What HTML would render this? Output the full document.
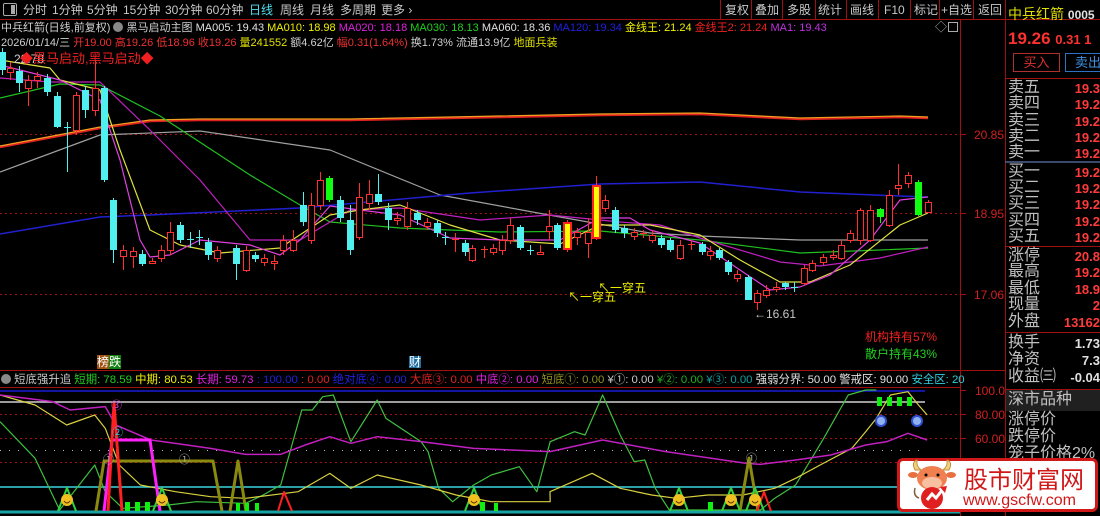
<!DOCTYPE html>
<html><head><meta charset="utf-8">
<style>
*{margin:0;padding:0;box-sizing:border-box}
body{width:1100px;height:516px;background:#000;overflow:hidden;position:relative;font-family:"Liberation Sans","Noto Sans CJK SC",sans-serif;font-size:12px;color:#c8c8c8}
.a{position:absolute;white-space:nowrap;line-height:1}
.t{font-size:12px;top:4px}
.rp{position:absolute;left:1008px;font-size:16px;color:#c0c0c0;line-height:1}
.rv{position:absolute;right:0;font-size:13px;font-weight:bold;color:#ff3b3b;line-height:1}
</style></head><body>
<svg id="s" width="1100" height="516" style="position:absolute;left:0;top:0" xmlns="http://www.w3.org/2000/svg">
<line x1="0" y1="19.5" x2="1100" y2="19.5" stroke="#a01010"/>
<line x1="960.5" y1="20" x2="960.5" y2="516" stroke="#a01010"/>
<line x1="1005.5" y1="20" x2="1005.5" y2="516" stroke="#a01010"/>
<line x1="0" y1="370.5" x2="1005" y2="370.5" stroke="#a01010"/>
<line x1="0" y1="387.5" x2="960" y2="387.5" stroke="#a01010"/>
<g stroke="#a01010">
<line x1="720.5" y1="0" x2="720.5" y2="19"/><line x1="751.5" y1="0" x2="751.5" y2="19"/><line x1="782.5" y1="0" x2="782.5" y2="19"/><line x1="815.5" y1="0" x2="815.5" y2="19"/><line x1="846.5" y1="0" x2="846.5" y2="19"/><line x1="878.5" y1="0" x2="878.5" y2="19"/><line x1="910.5" y1="0" x2="910.5" y2="19"/><line x1="939.5" y1="0" x2="939.5" y2="19"/><line x1="973.5" y1="0" x2="973.5" y2="19"/><line x1="1005.5" y1="0" x2="1005.5" y2="19"/>
</g>
<g stroke="#a01010" stroke-dasharray="2,3">
<line x1="0" y1="134.5" x2="960" y2="134.5"/><line x1="0" y1="213.5" x2="960" y2="213.5"/><line x1="0" y1="294.5" x2="960" y2="294.5"/>
<line x1="0" y1="414.5" x2="960" y2="414.5"/><line x1="0" y1="438.5" x2="960" y2="438.5"/><line x1="0" y1="462.5" x2="960" y2="462.5"/>
</g>
<line x1="0" y1="450.5" x2="925" y2="450.5" stroke="#bbb" stroke-dasharray="1,8"/>
<g stroke="#a01010"><line x1="960" y1="134.5" x2="966" y2="134.5"/><line x1="960" y1="213.5" x2="966" y2="213.5"/><line x1="960" y1="294.5" x2="966" y2="294.5"/><line x1="960" y1="390.5" x2="966" y2="390.5"/><line x1="960" y1="414.5" x2="966" y2="414.5"/><line x1="960" y1="438.5" x2="966" y2="438.5"/><line x1="960" y1="462.5" x2="966" y2="462.5"/></g>
<line x1="0" y1="391" x2="925" y2="391" stroke="#1a1ad8" stroke-width="1.5"/>
<line x1="0" y1="402" x2="925" y2="402" stroke="#d0d0d0" stroke-width="1.5"/>
<line x1="0" y1="487" x2="960" y2="487" stroke="#3ad6e0" stroke-width="1.5"/>
<line x1="0" y1="512" x2="960" y2="512" stroke="#17a3a3" stroke-width="3"/>
<g id="g"></g>
</svg>

<div class="a" style="left:3px;top:3px;width:14px;height:13px;border:1px solid #aaa;border-radius:2px"><div style="position:absolute;right:1px;top:1px;width:4px;height:9px;background:#aaa"></div></div>
<div class="a t" style="left:23px">分时</div>
<div class="a t" style="left:52px">1分钟</div>
<div class="a t" style="left:87px">5分钟</div>
<div class="a t" style="left:123px">15分钟</div>
<div class="a t" style="left:165px">30分钟</div>
<div class="a t" style="left:206px">60分钟</div>
<div class="a t" style="left:249px;color:#4fe0f0">日线</div>
<div class="a t" style="left:280px">周线</div>
<div class="a t" style="left:310px">月线</div>
<div class="a t" style="left:340px">多周期</div>
<div class="a t" style="left:381px">更多 ›</div>
<div class="a t" style="left:725px">复权</div>
<div class="a t" style="left:755px">叠加</div>
<div class="a t" style="left:787px">多股</div>
<div class="a t" style="left:818px">统计</div>
<div class="a t" style="left:850px">画线</div>
<div class="a t" style="left:884px">F10</div>
<div class="a t" style="left:914px">标记</div>
<div class="a t" style="left:941px">+自选</div>
<div class="a t" style="left:978px">返回</div>

<div class="a" style="left:1px;top:22px;font-size:11px;color:#d0d0d0">中兵红箭(日线,前复权) <span style="display:inline-block;width:10px;height:10px;border-radius:50%;background:#888;vertical-align:-1px"></span> 黑马启动主图 <span style="color:#e0e0e0">MA005: 19.43</span> <span style="color:#f0f000">MA010: 18.98</span> <span style="color:#e020e0">MA020: 18.18</span> <span style="color:#20d020">MA030: 18.13</span> <span style="color:#e0e0e0">MA060: 18.36</span> <span style="color:#2020e0">MA120: 19.34</span> <span style="color:#f0f000">金线王: 21.24</span> <span style="color:#f02020">金线王2: 21.24</span> <span style="color:#c030e0">MA1: 19.43</span></div>
<div class="a" style="left:935px;top:21px;color:#aaa">◇</div>
<div class="a" style="left:948px;top:22px;width:10px;height:10px;border:1px solid #aaa"></div>
<div class="a" style="left:1px;top:38px;font-size:11px;color:#d0d0d0">2026/01/14/三 <span style="color:#f03030">开19.00 高19.26 低18.96 收19.26</span> <span style="color:#e0e000">量241552</span> 额4.62亿 <span style="color:#f03030">幅0.31(1.64%)</span> 换1.73% 流通13.9亿 <span style="color:#e0e000">地面兵装</span></div>
<div class="a" style="left:14px;top:53px;color:#d0d0d0">22.78</div>
<div class="a" style="left:20px;top:52px;color:#f02020;font-size:13px">◆黑马启动,黑马启动◆</div>

<div class="a" style="left:974px;top:129px;color:#d02020">20.85</div>
<div class="a" style="left:974px;top:208px;color:#d02020">18.95</div>
<div class="a" style="left:974px;top:289px;color:#d02020">17.06</div>
<div class="a" style="left:975px;top:385px;color:#d02020">100.0</div>
<div class="a" style="left:975px;top:409px;color:#d02020">80.00</div>
<div class="a" style="left:975px;top:433px;color:#d02020">60.00</div>

<div class="a" style="left:598px;top:282px;color:#f0f000">↖一穿五</div>
<div class="a" style="left:568px;top:291px;color:#f0f000">↖一穿五</div>
<div class="a" style="left:754px;top:308px;color:#c8c8c8">←16.61</div>
<div class="a" style="left:865px;top:331px;color:#f02020">机构持有57%</div>
<div class="a" style="left:865px;top:348px;color:#20d020">散户持有43%</div>
<div class="a" style="left:97px;top:356px;font-size:12px"><span style="background:#a05010;color:#fff">榜</span><span style="background:#108010;color:#fff">跌</span></div>
<div class="a" style="left:409px;top:356px;font-size:12px;background:#2070a0;color:#fff">财</div>

<div class="a" style="left:1px;top:374px;font-size:11.4px;color:#c8c8c8"><span style="display:inline-block;width:10px;height:10px;border-radius:50%;background:#888;vertical-align:-1px"></span> 短底强升追 <span style="color:#20d020">短期: 78.59</span> <span style="color:#f0f000">中期: 80.53</span> <span style="color:#e020e0">长期: 59.73</span> <span style="color:#2020e0">: 100.00</span> <span style="color:#e02020">: 0.00</span> <span style="color:#2020e0">绝对底④: 0.00</span> <span style="color:#e02020">大底③: 0.00</span> <span style="color:#e020e0">中底②: 0.00</span> <span style="color:#909020">短底①: 0.00</span> <span style="color:#c8c8c8">¥①: 0.00</span> <span style="color:#20b020">¥②: 0.00</span> <span style="color:#10a0a0">¥③: 0.00</span> <span style="color:#e0e0e0">强弱分界: 50.00</span> <span style="color:#e0e0e0">警戒区: 90.00</span> <span style="color:#30d0e0">安全区: 20</span></div>

<div class="a" style="left:1008px;top:7px;font-size:14px;color:#e0e000">中兵红箭 <span style="font-size:12px;font-weight:bold;color:#e0e0e0">0005</span></div>
<div class="a" style="left:1008px;top:30px;font-size:17px;font-weight:bold;color:#ff3030">19.26 <span style="font-size:13px">0.31 1</span></div>
<div class="a" style="left:1013px;top:53px;width:47px;height:19px;border:1px solid #b03030;color:#e03030;font-size:13px;text-align:center;line-height:17px">买入</div>
<div class="a" style="left:1065px;top:53px;width:40px;height:19px;border:1px solid #3070c0;color:#4090e0;font-size:13px;padding-left:9px;line-height:17px">卖出</div>
<svg width="95" height="400" style="position:absolute;left:1005px;top:0">
<line x1="0" y1="78.5" x2="95" y2="78.5" stroke="#a01010"/>
<line x1="0" y1="162" x2="95" y2="162" stroke="#506090" stroke-width="1.5"/>
<line x1="0" y1="246.5" x2="95" y2="246.5" stroke="#a01010"/>
<line x1="0" y1="332.5" x2="95" y2="332.5" stroke="#a01010"/>
<line x1="0" y1="389.5" x2="95" y2="389.5" stroke="#a01010"/>
</svg>
<div style="position:absolute;left:1006px;top:390px;width:94px;height:21px;background:#202020"></div>
<div class="rp" style="top:80px">卖五</div><div class="rv" style="top:82px">19.3</div>
<div class="rp" style="top:96px">卖四</div><div class="rv" style="top:98px">19.2</div>
<div class="rp" style="top:113px">卖三</div><div class="rv" style="top:115px">19.2</div>
<div class="rp" style="top:129px">卖二</div><div class="rv" style="top:131px">19.2</div>
<div class="rp" style="top:145px">卖一</div><div class="rv" style="top:147px">19.2</div>
<div class="rp" style="top:164px">买一</div><div class="rv" style="top:166px">19.2</div>
<div class="rp" style="top:180px">买二</div><div class="rv" style="top:182px">19.2</div>
<div class="rp" style="top:196px">买三</div><div class="rv" style="top:198px">19.2</div>
<div class="rp" style="top:213px">买四</div><div class="rv" style="top:215px">19.2</div>
<div class="rp" style="top:229px">买五</div><div class="rv" style="top:231px">19.2</div>
<div class="rp" style="top:248px">涨停</div><div class="rv" style="top:250px">20.8</div>
<div class="rp" style="top:264px">最高</div><div class="rv" style="top:266px">19.2</div>
<div class="rp" style="top:281px">最低</div><div class="rv" style="top:283px">18.9</div>
<div class="rp" style="top:297px">现量</div><div class="rv" style="top:299px">2</div>
<div class="rp" style="top:314px">外盘</div><div class="rv" style="top:316px">13162</div>
<div class="rp" style="top:335px">换手</div><div class="rv" style="top:337px;color:#e0e0e0">1.73</div>
<div class="rp" style="top:352px">净资</div><div class="rv" style="top:354px;color:#e0e0e0">7.3</div>
<div class="rp" style="top:369px">收益㈢</div><div class="rv" style="top:371px;color:#e0e0e0">-0.04</div>
<div class="rp" style="top:392px">深市品种</div>
<div class="rp" style="top:412px">涨停价</div>
<div class="rp" style="top:429px">跌停价</div>
<div class="rp" style="top:446px">笼子价格2%限</div>

<div style="position:absolute;left:897px;top:458px;width:201px;height:54px;background:#fff;border:3px solid #d01818;border-radius:6px"></div>
<svg width="60" height="54" style="position:absolute;left:905px;top:458px">
<path d="M10 12 Q6 4 12 2 Q11 8 16 12Z" fill="#f0d080" stroke="#c09040"/>
<path d="M44 12 Q48 4 42 2 Q43 8 38 12Z" fill="#f0d080" stroke="#c09040"/>
<ellipse cx="8" cy="17" rx="5" ry="3" fill="#e87040"/><ellipse cx="46" cy="17" rx="5" ry="3" fill="#e87040"/>
<ellipse cx="27" cy="20" rx="15" ry="12" fill="#f08050"/>
<ellipse cx="27" cy="25" rx="10" ry="6" fill="#f8c0a0"/>
<circle cx="21" cy="17" r="1.5" fill="#000"/><circle cx="33" cy="17" r="1.5" fill="#000"/>
<circle cx="27" cy="40" r="11" fill="#e02020"/>
<path d="M22 42 L27 36 L31 40 L38 31" stroke="#fff" stroke-width="3" fill="none"/>
<path d="M35 29 L42 28 L40 35Z" fill="#e02020"/>
<path d="M14 40 Q8 38 10 30" stroke="#806040" stroke-width="1.5" fill="none"/>
</svg>
<div class="a" style="left:964px;top:466px;font-size:24px;color:#d01818;font-family:'Noto Sans CJK SC',sans-serif">股市财富网</div>
<div class="a" style="left:963px;top:493px;font-size:16px;color:#d01818">www.gscfw.com</div>

<script>
var NS="http://www.w3.org/2000/svg",G=document.getElementById('g');
function el(t,a){var e=document.createElementNS(NS,t);for(var k in a)e.setAttribute(k,a[k]);G.appendChild(e);return e;}
function pl(pts,c,w){el('polyline',{points:pts.map(function(p){return p.join(',')}).join(' '),fill:'none',stroke:c,'stroke-width':w||1,'stroke-linejoin':'round'});}
pl([[0,147],[100,128],[150,121],[200,120],[350,120],[500,117],[600,115],[700,114],[800,119],[900,117],[928,118]],'#e02020',2.5);
pl([[0,146],[100,127],[150,120],[200,119],[350,119],[500,116],[600,114],[700,113],[800,118],[900,116],[928,117]],'#f0a020',1.2);
pl([[0,172],[100,135],[200,131],[330,150],[440,195],[560,217],[650,233],[700,236],[800,240],[928,240]],'#a0a0a0',1.2);
pl([[0,234],[100,217],[150,215],[300,208],[470,193],[600,184],[700,182],[800,192],[900,196],[928,197]],'#2020d0',1.5);
pl([[0,98],[60,84],[100,85],[160,116],[250,175],[300,205],[330,222],[400,228],[500,232],[600,231],[700,240],[800,253],[880,250],[928,248]],'#20c020',1.2);
pl([[0,78],[50,82],[100,82],[150,130],[200,180],[250,240],[300,240],[350,210],[400,208],[480,220],[550,215],[620,222],[660,225],[700,238],[780,262],[820,266],[880,258],[928,247]],'#c020c0',1.2);
pl([[0,60],[50,68],[60,80],[100,90],[120,150],[150,230],[180,245],[220,253],[280,248],[330,215],[360,210],[400,205],[450,225],[500,240],[560,244],[600,225],[650,225],[700,235],[740,260],[780,282],[810,282],[850,265],[900,225],[928,213]],'#e0e040',1.2);
pl([[0,65],[60,80],[100,100],[120,160],[140,240],[150,257],[170,255],[200,240],[250,245],[280,255],[300,240],[330,206],[360,210],[400,215],[450,238],[500,240],[560,240],[600,218],[630,218],[650,230],[700,243],[740,270],[770,290],[800,287],[830,275],[870,240],[900,200],[928,197]],'#e040e0',1.2);
var C=[[2,52,70,48,75,'c'],[10,68,72,62,80,'r'],[19,71,83,66,92,'c'],[28,80,88,75,106,'r'],[37,76,80,72,88,'r'],[47,78,92,74,96,'c'],[57,96,127,92,128,'c'],[67,127,129,122,172,'x'],[76,95,130,92,135,'r'],[85,90,110,86,118,'c'],[95,88,110,60,116,'r'],[104,88,180,86,182,'c'],[113,200,250,198,263,'c'],[123,250,256,245,270,'r'],[133,251,256,247,268,'r'],[142,254,264,250,266,'c'],[152,261,263,258,263,'r'],[161,250,258,245,262,'r'],[170,232,250,222,255,'r'],[180,225,240,222,243,'c'],[190,239,241,232,248,'x'],[199,237,239,230,245,'x'],[208,242,255,238,260,'c'],[217,250,258,246,262,'r'],[236,248,264,245,280,'c'],[246,250,270,246,272,'r'],[255,255,259,252,262,'c'],[264,258,262,254,266,'r'],[274,261,263,255,270,'r'],[283,240,250,235,255,'r'],[293,240,250,230,252,'r'],[303,205,222,192,226,'c'],[311,205,240,193,244,'r'],[320,180,205,172,210,'r'],[329,178,200,176,202,'g'],[340,200,218,196,222,'c'],[350,220,250,205,255,'c'],[359,197,237,183,240,'r'],[369,194,203,180,210,'r'],[378,194,202,174,205,'c'],[388,208,220,203,230,'c'],[397,218,220,212,225,'r'],[407,208,226,202,230,'r'],[417,213,220,210,225,'c'],[427,222,226,218,230,'r'],[437,223,233,220,237,'c'],[445,237,238,232,245,'x'],[455,239,241,233,252,'x'],[465,243,252,240,256,'c'],[472,248,260,245,262,'r'],[484,249,250,246,258,'x'],[493,248,252,244,255,'r'],[502,240,250,235,255,'r'],[510,225,240,218,244,'r'],[520,227,248,225,250,'c'],[530,250,251,245,255,'x'],[540,252,254,245,254,'r'],[549,226,231,210,240,'r'],[557,225,248,223,250,'c'],[567,223,249,220,252,'y'],[577,232,237,228,245,'r'],[588,232,243,218,258,'r'],[596,186,238,176,240,'y'],[605,200,208,195,212,'r'],[615,210,230,207,233,'c'],[624,228,233,225,238,'c'],[634,232,236,228,240,'r'],[643,233,234,230,238,'x'],[652,235,240,230,243,'r'],[661,238,245,235,248,'c'],[670,240,250,238,252,'c'],[680,245,258,240,260,'r'],[691,244,246,240,250,'x'],[702,244,252,242,255,'c'],[710,251,255,246,260,'r'],[719,250,258,248,260,'c'],[728,262,272,260,275,'c'],[737,274,278,270,282,'r'],[748,277,300,275,300,'c'],[757,293,302,290,310,'r'],[766,290,295,285,298,'r'],[776,287,289,282,292,'r'],[785,283,287,282,290,'c'],[794,287,288,282,292,'x'],[804,268,283,265,285,'r'],[812,263,270,260,272,'r'],[823,257,262,254,265,'r'],[833,255,257,250,260,'r'],[841,245,258,240,260,'r'],[850,233,240,230,243,'r'],[860,210,240,208,245,'r'],[870,210,240,205,242,'r'],[880,209,217,208,223,'g'],[889,195,225,190,227,'r'],[898,185,188,164,195,'r'],[908,175,183,172,188,'r'],[918,182,215,180,216,'g'],[928,202,212,200,213,'r']];
C.forEach(function(c){var x=c[0],t=c[5];
 var col=t=='r'||t=='y'?'#ff3030':t=='g'?'#10ff10':'#50f0f0';
 if(t=='x'){col=(x==67||x==190||x==199||x==445||x==530||x==794)?'#50f0f0':'#ff3030';}
 el('line',{x1:x+.5,y1:c[3],x2:x+.5,y2:c[4],stroke:col});
 if(t=='x'){el('line',{x1:x-3,y1:c[1]+.5,x2:x+4,y2:c[1]+.5,stroke:col});return;}
 var h=Math.max(2,c[2]-c[1]);
 if(t=='r')el('rect',{x:x-2.5,y:c[1]+.5,width:6,height:h,fill:'#000',stroke:col});
 else if(t=='y')el('rect',{x:x-3,y:c[1],width:7,height:h,fill:'#ffff00',stroke:'#ff2020','stroke-width':2});
 else el('rect',{x:x-3,y:c[1],width:7,height:h,fill:col});
});
function Z(x0,y0,a){return a.map(function(p){return [x0+p[0]/2.85,Math.min(511,y0+p[1]/3)]});}
pl(Z(0,395,[[0,80],[100,190],[170,345],[270,210],[300,290],[350,340],[480,330],[560,320],[700,325],[750,300],[800,270],[860,45],[890,45],[920,5],[950,0],[1000,140],[1075,15],[1100,70],[1200,140],[1220,170],[1250,280],[1290,320],[1350,270],[1400,240],[1480,215],[1530,290],[1568,140]]).concat(Z(550,355,[[70,230],[100,240],[150,120],[200,240],[240,320],[270,315],[300,400],[340,465],[600,465],[640,430],[700,390],[780,250],[850,120],[900,105],[930,105]])),'#40c040',1.2);
pl(Z(0,395,[[0,0],[100,30],[190,90],[270,60],[300,100],[340,210],[400,270],[500,290],[600,305],[700,310],[850,290],[940,235],[1000,280],[1075,240],[1200,270],[1300,300],[1400,320],[1568,320]]).concat(Z(550,355,[[0,410],[120,355],[200,400],[290,420],[360,430],[450,420],[550,420],[640,400],[700,370],[770,330],[860,280],[900,230],[930,190],[970,120],[1020,110],[1050,150],[1075,180]])),'#d8d040',1.2);
pl(Z(0,395,[[0,0],[150,20],[200,45],[300,35],[330,90],[430,135],[500,145],[600,160],[700,178],[800,178],[870,150],[940,125],[1000,145],[1075,125],[1200,140],[1350,160],[1568,170]]).concat(Z(550,355,[[150,255],[330,290],[560,325],[600,328],[700,315],[800,300],[900,270],[960,260],[1020,235],[1075,255]])),'#c020c0',1.5);
pl([[96,511],[104,461],[213,461],[222,511]],'#8a8a10',3);
pl([[230,511],[238,461],[246,511]],'#8a8a10',3);
pl([[740,511],[749,458],[758,511]],'#8a8a10',3);
pl([[104,511],[112,440],[150,440],[160,511]],'#ff20ff',3);
pl([[108,511],[114,404],[122,511]],'#ff2020',3);
pl([[278,511],[284,492],[292,511]],'#ff2020',2);
pl([[757,511],[764,492],[771,511]],'#ff2020',2);
[[67],[162],[474],[679],[731],[755]].forEach(function(p){pl([[p[0]-9,511],[p[0],488],[p[0]+9,511]],'#30d040',2);el('circle',{cx:p[0],cy:500,r:6,fill:'#f0c020'});el('path',{d:'M'+(p[0]-3)+' 501 Q'+p[0]+' 505 '+(p[0]+3)+' 501',stroke:'#603000',fill:'none'});});
[[125,502,5,9],[135,502,5,9],[145,502,5,9],[236,503,4,8],[245,503,4,8],[255,503,4,8],[480,502,5,9],[494,503,4,8],[708,502,5,9],[877,397,5,9],[887,397,5,9],[897,397,5,9],[907,397,5,9]].forEach(function(r){el('rect',{x:r[0],y:r[1],width:r[2],height:r[3],fill:'#10f010'});});
[[881,421],[917,421]].forEach(function(p){el('circle',{cx:p[0],cy:p[1],r:6,fill:'#3050d0'});el('circle',{cx:p[0],cy:p[1],r:4,fill:'#90b0f0'});});
[[116,405,'③','#e040e0'],[117,432,'②','#40c0e0'],[108,459,'①','#aaa'],[184,459,'①','#aaa'],[751,458,'①','#aaa']].forEach(function(p){var t=el('text',{x:p[0]-5,y:p[1]+4,fill:p[3],'font-size':11});t.textContent=p[2];});
</script>
</body></html>
